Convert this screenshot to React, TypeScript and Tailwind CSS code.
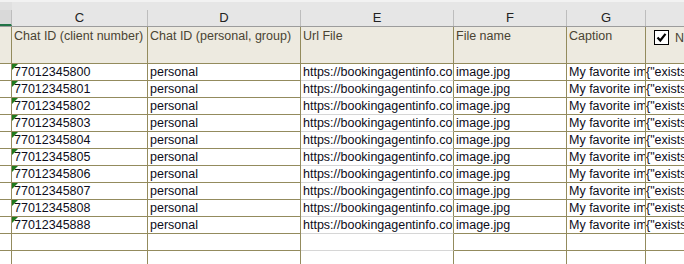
const cols = [
  { key: "C", w: "w-[136px]", title: "Chat ID (client number)" },
  { key: "D", w: "w-[153px]", title: "Chat ID (personal, group)" },
  { key: "E", w: "w-[153px]", title: "Url File" },
  { key: "F", w: "w-[113px]", title: "File name" },
  { key: "G", w: "w-[79px]", title: "Caption" },
];

const ids = [
  "77012345800",
  "77012345801",
  "77012345802",
  "77012345803",
  "77012345804",
  "77012345805",
  "77012345806",
  "77012345807",
  "77012345808",
  "77012345888",
];

const olive = "border-[#938b5d]";

function Check() {
  return (
    <span className="mr-[6px] inline-flex h-[15px] w-[15px] items-center justify-center border border-black bg-white">
      <svg width="11" height="11" viewBox="0 0 11 11">
        <path d="M1.5 5.5 L4.3 8.5 L9.5 1.8" fill="none" stroke="black" strokeWidth="2.2" />
      </svg>
    </span>
  );
}

function Flag() {
  return (
    <svg className="absolute left-0 top-0" width="6" height="6" viewBox="0 0 6 6">
      <polygon points="0,0 6,0 0,6" fill="#1f7a1f" />
    </svg>
  );
}

export default function App() {
  const rows = [...ids.map((id) => id), "", ""];

  return (
    <div className="h-[264px] w-[684px] overflow-hidden bg-white font-['Liberation_Sans',Arial,sans-serif] text-[12.5px]">
      {/* top strip */}
      <div className="flex h-[10px] border-t-2 border-[#f2f2f2] bg-[#e6e6e6]">
        <div className="w-[12px] bg-[#e0e0e0]" />
      </div>

      {/* column letters */}
      <div className="flex h-[17px] border-b border-[#9c9c9c] bg-[#e6e6e6] text-[13px] leading-[16px] text-[#222]">
        <div className="w-[12px] border-b-2 border-r border-b-[#217346] border-r-[#bdbdbd] bg-[#d9d9d9]" />
        {cols.map((c) => (
          <div key={c.key} className={`${c.w} border-r border-[#bdbdbd] text-center`}>
            {c.key}
          </div>
        ))}
        <div className="flex-1" />
      </div>

      {/* header cells */}
      <div className={`flex h-[37px] border-b ${olive} bg-[#edeae0] leading-[15px] text-[#4a4433]`}>
        <div className={`w-[12px] border-r ${olive}`} />
        {cols.map((c) => (
          <div key={c.key} className={`${c.w} overflow-hidden whitespace-nowrap border-r ${olive} px-[2px] pt-[2px]`}>
            {c.title}
          </div>
        ))}
        <div className="flex flex-1 items-start whitespace-nowrap pl-[8px] pt-[3px]">
          <Check />
          <span className="pt-[1px]">N</span>
        </div>
      </div>

      {/* data */}
      {rows.map((id, i) => (
        <div key={i} className="flex h-[17px] leading-[16px] text-[#0d0d1a]">
          <div className={`w-[12px] border-b border-r ${olive}`} />
          <div className={`relative w-[136px] border-b border-r ${olive} px-[2px]`}>
            {id && <Flag />}
            {id}
          </div>
          <div className={`w-[153px] border-b border-r ${olive} px-[2px]`}>{id && "personal"}</div>
          <div className={`w-[153px] overflow-hidden whitespace-nowrap border-b border-r border-b-[#d6d6d6] border-r-[#938b5d] pl-[2px]`}>
            {id && "https://bookingagentinfo.com/image.jpg"}
          </div>
          <div className={`w-[113px] border-b border-r ${olive} px-[2px]`}>{id && "image.jpg"}</div>
          <div className={`w-[79px] overflow-hidden whitespace-nowrap border-b border-r ${olive} pl-[2px]`}>
            {id && "My favorite image"}
          </div>
          <div className={`flex-1 overflow-hidden whitespace-nowrap border-b ${olive}`}>
            {id && '{"exists":true}'}
          </div>
        </div>
      ))}
    </div>
  );
}
